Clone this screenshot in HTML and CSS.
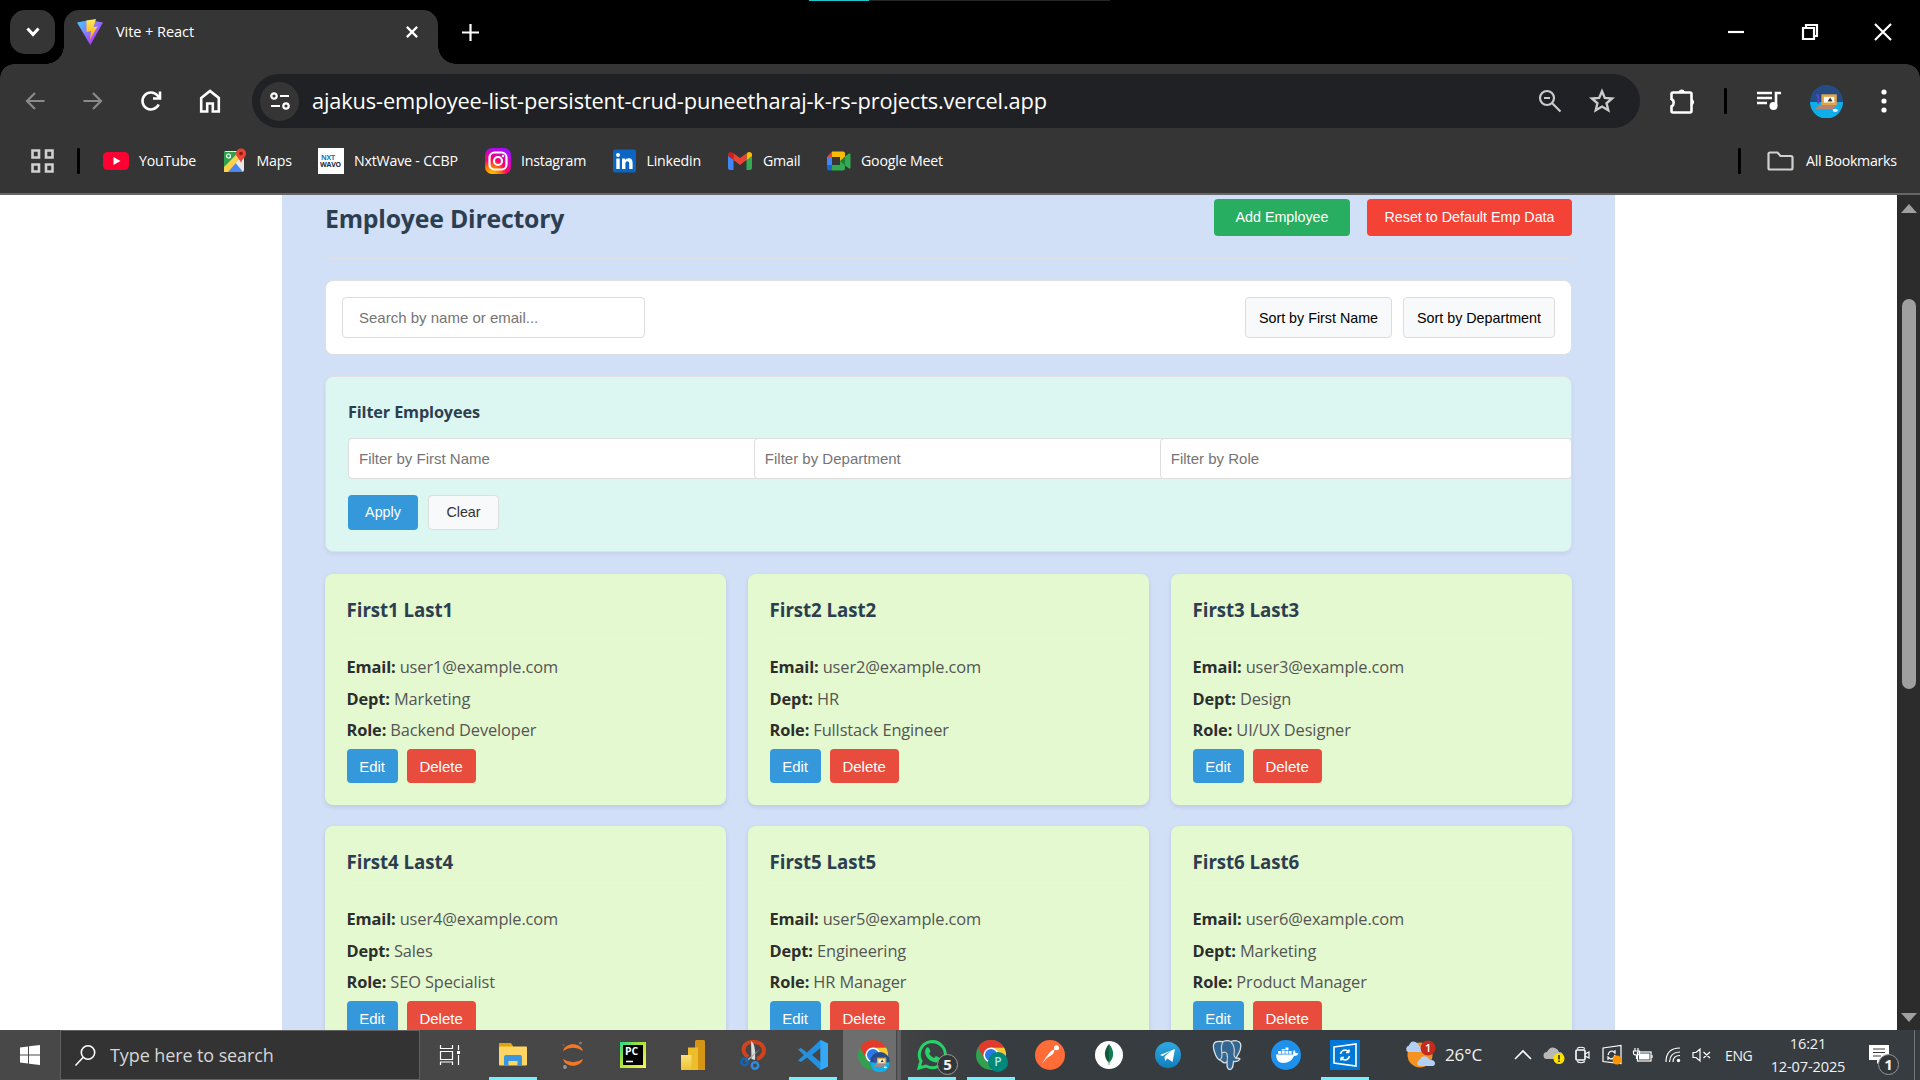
FILE: index.html
```
<!DOCTYPE html>
<html lang="en">
<head>
<meta charset="utf-8">
<title>Vite + React</title>
<link rel="stylesheet" href="styles.css">
</head>
<body>
<svg class="defs" width="0" height="0" aria-hidden="true">
  <defs>
    <linearGradient id="viteA" x1="0" y1="0" x2="1" y2="1"><stop offset="0" stop-color="#41d1ff"/><stop offset=".8" stop-color="#bd34fe"/></linearGradient>
    <linearGradient id="viteB" x1="0" y1="0" x2="0" y2="1"><stop offset="0" stop-color="#ffea63"/><stop offset="1" stop-color="#ffa800"/></linearGradient>
    <radialGradient id="insta" cx=".25" cy="1.05" r="1.1"><stop offset="0" stop-color="#ffd600"/><stop offset=".3" stop-color="#ff7a00"/><stop offset=".55" stop-color="#ff0169"/><stop offset="1" stop-color="#a40dff"/></radialGradient>
    <linearGradient id="pycharm" x1="0" y1="0" x2="1" y2="1"><stop offset="0" stop-color="#21d789"/><stop offset=".4" stop-color="#a5e23a"/><stop offset="1" stop-color="#fcf84a"/></linearGradient>
    <linearGradient id="tele" x1="0" y1="0" x2="0" y2="1"><stop offset="0" stop-color="#2fa9e0"/><stop offset="1" stop-color="#1180be"/></linearGradient>
    <linearGradient id="pbi" x1="0" y1="0" x2="0" y2="1"><stop offset="0" stop-color="#fbdf77"/><stop offset="1" stop-color="#efc432"/></linearGradient>
    <symbol id="chrome" viewBox="-15 -15 30 30">
      <circle r="15" fill="#32a04f"/>
      <path d="M13-7.5A15 15 0 0 1 0 15L6.5 3.750L0-7.5z" fill="#fcc934"/>
      <path d="M-13-7.5A15 15 0 0 1 13-7.5H0L-6.5 3.750z" fill="#e23b2e"/>
      <circle r="7.600" fill="#fff"/><circle r="6" fill="#2a79ea"/>
    </symbol>
    <symbol id="avatar" viewBox="0 0 32 32">
      <circle cx="16" cy="16" r="16" fill="#244d85"/>
      <path d="M0 16.500A16 16 0 0 0 32 16.500z" fill="#0eaee8"/>
      <rect x="11" y="9" width="15" height="10.500" fill="#dfa548"/><rect x="13.500" y="11.500" width="10" height="5.500" fill="#fff"/>
      <path d="M17 16l2.500-4 2.500 4z" fill="#333"/>
      <path d="M9 19.500h17l-4 4H5z" fill="#b98273"/><path d="M6 10.500q2-2 2 1.500v6" fill="none" stroke="#5a43c8" stroke-width="2"/>
      <ellipse cx="24.500" cy="24.500" rx="2.500" ry="1.500" fill="#fff"/>
    </symbol>
  </defs>
</svg>

<header class="browser">
  <div class="tabstrip">
    <div class="load-strip"></div>
    <button class="tab-search" aria-label="Search tabs"><svg width="14" height="10" viewBox="0 0 14 10"><path d="M1.500 1.500L7 7.500l5.500-6" class="ln w3"/></svg></button>
    <div class="tab">
      <svg width="26" height="26" viewBox="0 0 26 26"><path d="M0 3.500L12.500 1 26 3.500 13.300 26z" fill="url(#viteA)"/><path d="M9.500 1.500L19 0l-2.500 8 4-.5L13 20.500l1-8.500-4.500 1z" fill="url(#viteB)"/></svg>
      <span class="tab-title">Vite + React</span>
      <svg class="tab-close" width="12" height="12" viewBox="0 0 14 14"><path d="M1 1l12 12M13 1L1 13" class="ln w25"/></svg>
    </div>
    <svg class="new-tab" width="17" height="17" viewBox="0 0 17 17"><path d="M8.500 0v17M0 8.500h17" class="ln w2"/></svg>
    <div class="win-controls">
      <svg width="16" height="16" viewBox="0 0 16 16"><path d="M0 8h16" class="ln w2"/></svg>
      <svg width="16" height="16" viewBox="0 0 16 16"><path d="M1 4h11v11H1zM4 4V1h11v11h-3" class="ln w2"/></svg>
      <svg width="16" height="16" viewBox="0 0 16 16"><path d="M0 0l16 16M16 0L0 16" class="ln w2"/></svg>
    </div>
  </div>

  <div class="toolbar">
    <span class="tool dim"><svg width="20" height="18" viewBox="0 0 20 18"><path d="M19.500 9H2M10 1L2 9l8 8" class="ln w2"/></svg></span>
    <span class="tool dim"><svg width="20" height="18" viewBox="0 0 20 18"><path d="M.5 9H18M10 1l8 8-8 8" class="ln w2"/></svg></span>
    <span class="tool"><svg width="22" height="22" viewBox="0 0 22 22"><path d="M18.700 14.500A8.500 8.500 0 1 1 17.500 5.500L20 8.500M20 1.500v7h-7" class="ln w25"/></svg></span>
    <span class="tool home"><svg width="22" height="24" viewBox="0 0 22 24"><path d="M2.200 9L11 2l8.800 7v13.500h-6v-8H8.200v8h-6z" class="ln w25"/></svg></span>
    <div class="omnibox">
      <span class="site-info"><svg width="20" height="20" viewBox="0 0 20 20"><circle cx="4" cy="5" r="2.700" class="ln w2"/><path d="M10 5h9M1 15h9" class="ln w2"/><circle cx="16" cy="15" r="2.700" class="ln w2"/></svg></span>
      <span class="url">ajakus-employee-list-persistent-crud-puneetharaj-k-rs-projects.vercel.app</span>
      <span class="omni-icons">
        <svg width="24" height="24" viewBox="0 0 24 24"><circle cx="9" cy="9" r="7" class="ln w2"/><path d="M14 14l8.500 8.500M6 9h6" class="ln w2"/></svg>
        <svg width="26" height="26" viewBox="0 0 24 24"><path d="M12 3l2.600 6.200 6.700.5-5.100 4.400 1.600 6.500-5.800-3.500-5.800 3.500 1.600-6.500-5.100-4.400 6.700-.5z" class="ln w2"/></svg>
      </span>
    </div>
    <span class="tool ext"><svg width="28" height="28" viewBox="0 0 28 28"><path d="M5 5.500H22q1.500 0 1.500 1.500V24q0 1.500-1.500 1.500H5Q3.500 25.500 3.500 24V19.500a4.300 4.300 0 0 0 0-7.500V7Q3.500 5.500 5 5.500z" class="ln w25"/><path d="M10.500 5a3.300 3.300 0 0 1 6.400 0zM24 12a3.300 3.300 0 0 1 0 6.200z" fill="#fff"/></svg></span>
    <span class="tool sep"><i class="bar"></i></span>
    <span class="tool"><svg width="26" height="20" viewBox="0 0 26 20"><path d="M1 2h15M1 7h15M1 12h10" class="ln w25"/><path d="M20 15V2h5" class="ln w25"/><circle cx="17.500" cy="15" r="4" fill="#fff"/></svg></span>
    <span class="tool account"><svg width="33" height="33"><use href="#avatar"/></svg></span>
    <span class="tool"><svg width="6" height="24" viewBox="0 0 6 24" fill="#fff"><circle cx="3" cy="3" r="2.600"/><circle cx="3" cy="12" r="2.600"/><circle cx="3" cy="21" r="2.600"/></svg></span>
  </div>

  <nav class="bookmarks">
    <svg class="apps" width="23" height="24" viewBox="0 0 23 24"><path d="M1.500 1.500h6.500v7H1.500zM15 1.500h6.500v7H15zM1.500 15.500h6.500v7H1.500zM15 15.500h6.500v7H15z" class="ln w25 light"/></svg>
    <i class="bar"></i>
    <div class="marks">
      <a class="mark"><svg width="26" height="26" viewBox="0 0 26 26"><rect y="4" width="26" height="18" rx="4.500" fill="#ff0033"/><path d="M10.500 9l7 4-7 4z" fill="#fff"/></svg>YouTube</a>
      <a class="mark"><svg width="26" height="26" viewBox="0 0 26 26"><rect x="3" y="3" width="20" height="21" rx="2" fill="#e8e8e8"/><path d="M3 4h15L3 20z" fill="#2ba24c"/><path d="M3 24l10-11 9 11z" fill="#4a86f5"/><path d="M3 19L18 4l3 4L7 24H3z" fill="#ffd04b"/><circle cx="7.500" cy="8" r="2" class="ln w1"/><path d="M20 15c-1-4-5-6-5-9.500a5 5 0 0 1 10 0c0 3.500-4 5.500-5 9.500z" fill="#ea4335"/><circle cx="20" cy="5.500" r="1.800" fill="#8c1b12"/></svg>Maps</a>
      <a class="mark"><svg width="26" height="26" viewBox="0 0 26 26"><rect width="26" height="26" fill="#fff"/><text x="3" y="12" class="nxt blue">NXT</text><text x="2" y="19" class="nxt">WAVO</text></svg>NxtWave - CCBP</a>
      <a class="mark"><svg width="26" height="26" viewBox="0 0 26 26"><rect width="26" height="26" rx="7" fill="url(#insta)"/><rect x="4.500" y="4.500" width="17" height="17" rx="5" class="ln w2"/><circle cx="13" cy="13" r="4" class="ln w2"/><circle cx="18" cy="8" r="1.200" fill="#fff"/></svg>Instagram</a>
      <a class="mark"><svg width="26" height="26" viewBox="0 0 26 26"><rect x="2" y="1.500" width="23" height="23" rx="2" fill="#0a66c2"/><g fill="#fff"><circle cx="7" cy="7" r="2"/><path d="M5.300 10.500h3.400V21H5.300zM11 10.500h3.200V12c.7-1.100 1.800-1.800 3.400-1.800 3 0 4 2 4 4.800v6h-3.400v-5.400c0-1.400-.5-2.400-1.800-2.400-1.400 0-2 1-2 2.400V21H11z"/></g></svg>Linkedin</a>
      <a class="mark"><svg width="26" height="26" viewBox="0 0 26 26"><path d="M1 7v13q0 2 2 2h3.500V11z" fill="#4285f4"/><path d="M25 7v13q0 2-2 2h-3.500V11z" fill="#34a853"/><path d="M19.500 6.500v5.500L25 8V6.500c0-2.700-3-3.200-4.500-2z" fill="#fbbc04"/><path d="M6.500 6.500v5.500L1 8V6.500c0-2.700 3-3.200 4.500-2z" fill="#c5221f"/><path d="M6.500 5.200L13 10l6.500-4.800V12L13 17 6.500 12z" fill="#ea4335"/></svg>Gmail</a>
      <a class="mark"><svg width="26" height="26" viewBox="0 0 26 26"><path d="M2 9h5v8H2z" fill="#4285f4"/><path d="M7 3.500v5.500H2z" fill="#ea4335"/><path d="M7 3.500h11q2 0 2 2V12l-5 2V9H7z" fill="#fbbc04"/><path d="M2 17h5v5.500H4q-2 0-2-2z" fill="#1967d2"/><path d="M7 17h8v-4h5v7.500q0 2-2 2H7z" fill="#34a853"/><path d="M15 13l5-4.500v9z" fill="#188038"/><path d="M20 8.500l4-3q1.500-.5 1.500 1v13q0 1.500-1.500 1l-4-3z" fill="#34a853"/></svg>Google Meet</a>
    </div>
    <i class="bar"></i>
    <a class="mark all"><svg width="27" height="20" viewBox="0 0 27 20"><path d="M1.500 3q0-1.500 1.500-1.500h7.500l3 3.500H24q1.500 0 1.500 1.500V17q0 1.500-1.500 1.500H3q-1.500 0-1.500-1.500z" class="ln w2 light"/></svg>All Bookmarks</a>
  </nav>
</header>

<div class="viewport">
  <main class="app">
    <div class="app-head">
      <h1>Employee Directory</h1>
      <div class="head-actions">
        <button class="btn add">Add Employee</button>
        <button class="btn reset">Reset to Default Emp Data</button>
      </div>
    </div>

    <section class="controls">
      <input class="search" type="text" placeholder="Search by name or email...">
      <div class="sorts">
        <button class="btn sort first">Sort by First Name</button>
        <button class="btn sort dept">Sort by Department</button>
      </div>
    </section>

    <section class="filters">
      <h3>Filter Employees</h3>
      <div class="filter-inputs">
        <input type="text" placeholder="Filter by First Name">
        <input type="text" placeholder="Filter by Department">
        <input type="text" placeholder="Filter by Role">
      </div>
      <div class="filter-actions">
        <button class="btn apply">Apply</button>
        <button class="btn clear">Clear</button>
      </div>
    </section>

    <section class="cards">
      <article class="card"><h2>First1 Last1</h2><p><b>Email:</b> user1@example.com</p><p><b>Dept:</b> Marketing</p><p><b>Role:</b> Backend Developer</p><div class="card-actions"><button class="btn edit">Edit</button><button class="btn delete">Delete</button></div></article>
      <article class="card"><h2>First2 Last2</h2><p><b>Email:</b> user2@example.com</p><p><b>Dept:</b> HR</p><p><b>Role:</b> Fullstack Engineer</p><div class="card-actions"><button class="btn edit">Edit</button><button class="btn delete">Delete</button></div></article>
      <article class="card"><h2>First3 Last3</h2><p><b>Email:</b> user3@example.com</p><p><b>Dept:</b> Design</p><p><b>Role:</b> UI/UX Designer</p><div class="card-actions"><button class="btn edit">Edit</button><button class="btn delete">Delete</button></div></article>
      <article class="card"><h2>First4 Last4</h2><p><b>Email:</b> user4@example.com</p><p><b>Dept:</b> Sales</p><p><b>Role:</b> SEO Specialist</p><div class="card-actions"><button class="btn edit">Edit</button><button class="btn delete">Delete</button></div></article>
      <article class="card"><h2>First5 Last5</h2><p><b>Email:</b> user5@example.com</p><p><b>Dept:</b> Engineering</p><p><b>Role:</b> HR Manager</p><div class="card-actions"><button class="btn edit">Edit</button><button class="btn delete">Delete</button></div></article>
      <article class="card"><h2>First6 Last6</h2><p><b>Email:</b> user6@example.com</p><p><b>Dept:</b> Marketing</p><p><b>Role:</b> Product Manager</p><div class="card-actions"><button class="btn edit">Edit</button><button class="btn delete">Delete</button></div></article>
    </section>
  </main>
  <div class="scrollbar">
    <svg width="16" height="9" viewBox="0 0 16 9"><path d="M0 9l8-9 8 9z" fill="#a0a0a0"/></svg>
    <span class="thumb"></span>
    <svg class="down" width="16" height="9" viewBox="0 0 16 9"><path d="M0 0l8 9 8-9z" fill="#a0a0a0"/></svg>
  </div>
</div>

<footer class="taskbar">
  <span class="start"><svg width="20" height="20" viewBox="0 0 20 20" fill="#fff"><path d="M0 2.500L8 1.400V9.500H0zM9 1.200L20 0v9.500H9zM0 10.500h8v8.100L0 17.500zM9 10.500h11V20L9 18.800z"/></svg></span>
  <div class="search-box"><svg width="21" height="21" viewBox="0 0 21 21"><circle cx="13" cy="7.500" r="6.700" class="ln w15"/><path d="M8 12.500L.5 20.500" class="ln w15"/></svg>Type here to search</div>
  <span class="task-view"><svg width="20" height="20" viewBox="0 0 20 20"><path d="M.5 0v3.500h12V0M.5 6.500h12v8H.5zM.5 20v-3h12v3M18.500 0v5M18.500 10v10" class="ln w1"/><path d="M17 6h3v3h-3z" fill="#fff"/></svg></span>
  <div class="pinned">
    <span class="pin open"><svg width="28" height="24" viewBox="0 0 28 24"><path d="M0 0h12l2 3v4H0z" fill="#e3a008"/><rect y="3.500" width="28" height="19" rx="1" fill="#ffd563"/><path d="M5 23V14q0-2 2-2h14q2 0 2 2v9h-4.500v-5h-9v5z" fill="#3a96dd"/></svg></span>
    <span class="pin"><svg width="22" height="28" viewBox="0 0 22 28"><path d="M1 10C3 1 19 1 21 10Q11 3.500 1 10zM1 18C3 27 19 27 21 18Q11 24.500 1 18z" fill="#f37726"/><circle cx="18.500" cy="2" r="1.600" fill="#777"/><circle cx="3" cy="26" r="1.900" fill="#999"/><circle cx="1.500" cy="4" r="1" fill="#666"/></svg></span>
    <span class="pin"><svg width="26" height="26" viewBox="0 0 26 26"><rect width="26" height="26" fill="url(#pycharm)"/><rect x="3" y="3" width="20" height="20" fill="#000"/><text x="5" y="13" class="pc">PC</text><path d="M6 19.500h7" class="ln w15"/></svg></span>
    <span class="pin"><svg width="24" height="30" viewBox="0 0 24 30"><path d="M14 1.500Q14 0 15.500 0h7Q24 0 24 1.500V30H14z" fill="#d79514"/><path d="M7 7.500h10V30H7z" fill="#edbd2c"/><path d="M0 15h10.500v15H0z" fill="url(#pbi)"/></svg></span>
    <span class="pin"><svg width="26" height="30" viewBox="0 0 26 30"><path d="M8 17C0 11 4 2 12 2 21 1 26 8 23 14q-2 4-6 5" fill="none" stroke="#d2431b" stroke-width="4"/><path d="M11 1q5 3 4 19l-3.500-1z" fill="#ddd"/><path d="M20 9L7 22l-2-1z" fill="#aaa"/><circle cx="4.500" cy="22" r="3.200" fill="none" stroke="#1464b4" stroke-width="2.500"/><circle cx="15" cy="25.500" r="3.200" fill="none" stroke="#2a8ce0" stroke-width="2.500"/></svg></span>
    <span class="pin open"><svg width="30" height="30" viewBox="0 0 30 30"><path d="M22.500 0L30 3.500v23L22.500 30 9 17.500 3 22 0 20.500 6 15 0 9.500 3 8l6 4.500zM22.500 8L14 15l8.500 7z" fill="#2391e0"/><path d="M22.500 0L30 3.500v23L22.500 30z" fill="#35a8f5"/></svg></span>
    <span class="pin active"><svg width="30" height="30"><use href="#chrome"/></svg><svg class="profile" width="20" height="20"><use href="#avatar"/></svg></span>
    <span class="pin open"><svg width="30" height="30" viewBox="0 0 30 30"><path d="M2 28l2-7a13 13 0 1 1 5 5z" fill="none" stroke="#25d366" stroke-width="3"/><path d="M9 8.500q2-2.500 3.500.5l1 2.500-1.500 2q2 3.500 5 4.500l2-2 4 2q0 4-4.500 4.500Q9.500 21 8 12.500 8 10 9 8.500z" fill="#25d366"/></svg><b class="count">5</b></span>
    <span class="pin open"><svg width="30" height="30"><use href="#chrome"/></svg><b class="initial">P</b></span>
    <span class="pin"><svg width="30" height="30" viewBox="0 0 30 30"><circle cx="15" cy="15" r="15" fill="#ff6c37"/><path d="M20 9l-2 5-6 4-5 5.500 4.500-7L16 11z" fill="#fff"/><circle cx="21.500" cy="7.800" r="2.500" fill="#fff"/></svg></span>
    <span class="pin"><svg width="28" height="28" viewBox="0 0 28 28"><circle cx="14" cy="14" r="14" fill="#fff"/><path d="M14 3c6 7 5 14 0 19z" fill="#0f7d4f"/><path d="M14 3c-6 7-5 14 0 19z" fill="#13593d"/><path d="M14 20v4" stroke="#8a9a90"/></svg></span>
    <span class="pin"><svg width="26" height="26" viewBox="0 0 26 26"><circle cx="13" cy="13" r="13" fill="url(#tele)"/><path d="M5 13l15-6-2.500 13-5-3.500-2.500 2.500-.5-4.500 7-6-9 5.500z" fill="#fff"/></svg></span>
    <span class="pin"><svg width="30" height="30" viewBox="0 0 30 30"><path d="M8 20C4 19 0 7 2 3.500 4 0 9 2 11 1.500c3-1 6-1 8 0 3-1 8-1.500 9.500 2C30 8 26 15 24 18q3 0 4 1-2 3-6.500 2.500C21 26 21 29 18 29.500c-3 0-3-3-3-7.500-2 1.500-3.500 1-5-.5z" fill="#336791" stroke="#d9dfe5" stroke-width="1.300"/><path d="M11 2C8 6 10 12 10 15q0 3-2 5M19 2c5 5 3 10 3 13q0 2 2 3M10 13q4-2 5 1t0 8" class="ln w1 light"/></svg></span>
    <span class="pin"><svg width="30" height="30" viewBox="0 0 30 30"><circle cx="15" cy="15" r="15" fill="#1d91ec"/><path d="M5 14.500h17q-.5-2.500 1-4.500 1.500 1 1.500 3 1.500-.3 3 .5-1 2.500-4.500 2.500-3 7-10.500 7-7.500 0-7.500-8.500z" fill="#fff"/><path d="M7 11h3v2.800H7zM10.700 11h3v2.800h-3zM14.400 11h3v2.800h-3zM18 11h2.700v2.800H18zM14.400 7.500h3v2.800h-3zM10.700 9h3v1.500h-3z" fill="#fff"/></svg></span>
    <span class="pin open"><svg width="30" height="30" viewBox="0 0 30 30"><rect width="30" height="30" fill="#0078d7"/><path d="M4 7l22-3v22L4 23z" class="ln w15"/><path d="M10.500 14q1-4 5-4 2.500.5 3.500 2.500v-3M19 12.500h-3M19.500 16q-1 4-5 4-2.500-.5-3.500-2.500v3M11 17.500h3" class="ln w15"/></svg></span>
  </div>
  <div class="weather"><svg width="31" height="30" viewBox="0 0 31 30"><circle cx="15" cy="15" r="12.500" fill="#f49322"/><path d="M3 12a3.500 3.500 0 0 1 1-6.500Q6 0 10.500 2q3 1 3.500 4 4 1 3 6z" fill="#b5d0f6"/><path d="M14 26a3.300 3.300 0 0 1 .5-6Q17 15 21 16.500q3 1 3.500 3.500 5-.5 5.500 3 0 3-2.500 3z" fill="#b5d0f6"/><circle cx="23" cy="8" r="7.500" fill="#c42b1c"/><text x="23" y="12.200" class="alert">1</text></svg>26°C</div>
  <div class="tray">
    <svg width="18" height="10" viewBox="0 0 18 10"><path d="M1 9l8-8 8 8" class="ln w15"/></svg>
    <svg width="20" height="18" viewBox="0 0 20 18"><path d="M3 13a3.500 3.500 0 0 1 0-7Q6 0 11 2q3 1 4 4 4 0 4 4 0 3-3 3z" fill="#b8b8b8"/><circle cx="15" cy="12.500" r="5.500" fill="#fce100"/><path d="M15 9v4.500M15 14.500v1.500" stroke="#222" stroke-width="1.500"/></svg>
    <svg width="15" height="18" viewBox="0 0 15 18"><rect x="1" y="4" width="9" height="10" rx="1" class="ln w15"/><path d="M10 8l4-2v6l-4-2M2 2.500Q6 0 10 2.500M2 15.500Q6 18 10 15.500" class="ln w1"/></svg>
    <svg width="20" height="20" viewBox="0 0 20 20"><path d="M1 3l18-2.500v18L1 16.500z" class="ln w1"/><path d="M6 10q1-4 4.500-4L13 8V5M13 10q-1 4-4.500 4L6 12v3" class="ln w1"/><circle cx="15" cy="15" r="4.500" fill="#ff9500"/></svg>
    <svg width="20" height="16" viewBox="0 0 20 16"><rect x="4.500" y="5" width="13.500" height="9" class="ln w1"/><rect x="6" y="6.500" width="10.500" height="6" fill="#fff"/><path d="M19 8v3M2 1v3M5 1v3M.5 4h6v2q0 2-3 2t-3-2zM3.500 8v4" class="ln w1"/></svg>
    <svg width="16" height="16" viewBox="0 0 16 16"><path d="M1 15Q1 1 15 1M4.500 15Q5 5 15 5M8 15q0-6.500 7-6.500" class="ln w1"/><circle cx="13.500" cy="13.500" r="1.700" fill="#fff"/></svg>
    <svg width="20" height="16" viewBox="0 0 20 16"><path d="M1 5.500h3L8 2v12L4 10.500H1zM11.500 5l6.500 6M18 5l-6.500 6" class="ln w1"/></svg>
  </div>
  <span class="lang">ENG</span>
  <div class="clock"><span>16:21</span><span>12-07-2025</span></div>
  <div class="notify"><svg width="20" height="20" viewBox="0 0 20 20"><path d="M0 0h20v15h-8l-4 4v-4H0z" fill="#fff"/><path d="M4 4h12M4 7.500h12M4 11h8" stroke="#383c3f" stroke-width="1.200"/></svg><b class="count">1</b></div>
  <i class="desktop"></i>
</footer>
</body>
</html>
```
FILE: styles.css
```
* { box-sizing: border-box; }
body {
  margin: 0;
  width: 1920px;
  height: 1080px;
  overflow: hidden;
  display: flex;
  flex-direction: column;
  background: #fff;
  font-family: "Open Sans", "Noto Sans", sans-serif;
}
svg { display: block; flex: none; overflow: visible; }
.defs { position: absolute; }
h1, h2, h3, p { margin: 0; }

.ln { fill: none; stroke: #fff; }
.w1 { stroke-width: 1.2; }
.w15 { stroke-width: 1.6; }
.w2 { stroke-width: 2.2; }
.w25 { stroke-width: 2.6; }
.w3 { stroke-width: 3; }
.light { stroke: #d0d0d0; }

/* browser frame */
.browser {
  flex: none;
  height: 195px;
  background: #353535;
  border-bottom: 2px solid #666;
  color: #fff;
}
.tabstrip {
  position: relative;
  display: flex;
  align-items: center;
  height: 64px;
  padding-left: 10px;
  background: #000;
}
.tabstrip::after {
  content: "";
  position: absolute;
  left: 0;
  top: 64px;
  width: 1920px;
  height: 14px;
  background:
    radial-gradient(circle at 100% 100%, transparent 13.5px, #000 14px) 0 0 / 14px 14px no-repeat,
    radial-gradient(circle at 0 100%, transparent 13.5px, #000 14px) 100% 0 / 14px 14px no-repeat;
}
.load-strip {
  position: absolute;
  left: 809px;
  top: 0;
  width: 301px;
  height: 1px;
  background: linear-gradient(90deg, #1fc3cb 60px, #262626 60px);
}
.tab-search {
  display: flex;
  align-items: center;
  justify-content: center;
  width: 45px;
  height: 44px;
  border: 0;
  border-radius: 15px;
  background: #353535;
}
.tab {
  position: relative;
  align-self: flex-end;
  display: flex;
  align-items: center;
  width: 374px;
  height: 54px;
  margin-left: 9px;
  padding: 0 20px 10px 13px;
  border-radius: 15px 15px 0 0;
  background: #353535;
}
.tab::before, .tab::after {
  content: "";
  position: absolute;
  bottom: 0;
  width: 18px;
  height: 18px;
}
.tab::before { left: -18px; background: radial-gradient(circle at 0 0, transparent 17.5px, #353535 18px); }
.tab::after { right: -18px; background: radial-gradient(circle at 100% 0, transparent 17.5px, #353535 18px); }
.tab-title { margin-left: 13px; padding-bottom: 2px; font-size: 14.6px; letter-spacing: -.1px; line-height: 20px; }
.tab-close { margin-left: auto; }
.new-tab { margin-left: 24px; }
.win-controls { display: flex; gap: 57.5px; margin-left: auto; padding-right: 29px; }

.toolbar { display: flex; align-items: center; height: 73px; padding: 1px 0 0 6px; }
.tool { display: flex; align-items: center; justify-content: center; width: 58px; flex: none; }
.tool.dim { opacity: .42; }
.tool.home { padding-left: 2px; }
.tool.sep { width: 29px; }
.tool.account { width: 57px; }
.bar { display: block; width: 3px; height: 26px; border-radius: 1px; background: #000; flex: none; }
.ext { margin-left: 13px; }
.omnibox {
  display: flex;
  align-items: center;
  width: 1388px;
  height: 54px;
  margin-left: 14px;
  padding: 0 25px 0 8px;
  border-radius: 27px;
  background: #202124;
}
.site-info {
  display: flex;
  align-items: center;
  justify-content: center;
  width: 39px;
  height: 39px;
  border-radius: 50%;
  background: #353535;
}
.url { margin-left: 13px; font-size: 21.8px; letter-spacing: -.14px; line-height: 30px; white-space: nowrap; }
.omni-icons { display: flex; align-items: center; gap: 27px; margin-left: auto; opacity: .76; }

.bookmarks { display: flex; align-items: center; height: 48px; padding: 0 23px 0 31px; }
.bookmarks .apps { margin-right: 23px; }
.marks {
  display: grid;
  grid-template-columns: 117.5px 97.5px 167px 125.5px 116.5px 98px 120px;
  margin: 0 auto 0 23px;
}
.mark { display: flex; align-items: center; gap: 10px; font-size: 14.2px; letter-spacing: -.2px; line-height: 20px; white-space: nowrap; }
.mark.all { width: 130px; margin-left: 26px; gap: 12px; letter-spacing: -.3px; }
.nxt { font: 700 7px "Open Sans", sans-serif; fill: #1b2a3f; }
.nxt.blue { fill: #1976c5; }

/* page */
.viewport { display: flex; height: 835px; flex: none; overflow: hidden; }
.app {
  width: 1333px;
  height: 835px;
  margin: 0 auto;
  padding: 4px 43px 0;
  overflow: hidden;
  background: #d1dff7;
}
.app-head {
  display: flex;
  align-items: center;
  justify-content: space-between;
  height: 60px;
  padding-bottom: 22px;
  border-bottom: 1px solid #e0e0e0;
}
h1 { font-size: 24.8px; letter-spacing: -.2px; line-height: 36px; color: #2c3e50; }
.head-actions { display: flex; gap: 17px; }
.btn {
  padding: 0;
  border: 0;
  border-radius: 4px;
  font: 14.3px "Liberation Sans", Arial, sans-serif;
  color: #fff;
  white-space: nowrap;
}
.head-actions .btn { padding-bottom: 2px; }
.add { width: 136px; height: 37px; background: #27ae60; }
.reset { width: 205px; height: 37px; background: #f44336; }

input {
  min-width: 0;
  border: 1px solid #ddd;
  border-radius: 4px;
  background: #fff;
  font: 15px "Liberation Sans", Arial, sans-serif;
}
input::placeholder { color: #757575; opacity: 1; }
.controls {
  display: flex;
  align-items: center;
  justify-content: space-between;
  height: 75px;
  margin-top: 21px;
  padding: 0 16px;
  border: 1px solid #e0e0e0;
  border-radius: 8px;
  background: #fff;
}
.search { width: 303px; height: 41px; padding: 0 16px; }
.sorts { display: flex; gap: 11px; }
.sort { height: 41px; border: 1px solid #ddd; background: #f8f9fa; color: #000; }
.sort.first { width: 147px; }
.sort.dept { width: 152px; }

.filters {
  height: 176px;
  margin-top: 21px;
  padding: 22px 22px 0;
  border: 1px solid #e0e0e0;
  border-radius: 8px;
  background: #dcf6f2;
  box-shadow: 0 2px 4px rgba(0, 0, 0, .06);
}
h3 { font-size: 16.3px; letter-spacing: -.15px; line-height: 26px; color: #2c3e50; }
.filter-inputs {
  display: grid;
  grid-template-columns: repeat(3, minmax(0, 1fr));
  gap: 16.6px;
  margin-top: 13px;
}
.filter-inputs input { width: 412.5px; height: 41px; padding: 0 10px; }
.filter-actions { display: flex; gap: 10px; margin-top: 16px; }
.filter-actions .btn { padding-bottom: 2px; }
.apply { width: 70px; height: 35px; background: #3498db; }
.clear { width: 71px; height: 35px; border: 1px solid #ddd; background: #f8f9fa; color: #333; }

.cards { display: grid; grid-template-columns: repeat(3, 1fr); gap: 21px 22px; margin-top: 22px; }
.card {
  height: 231px;
  padding: 22px 22px 22px 21.6px;
  border-radius: 8px;
  background: #e4f9cf;
  box-shadow: 0 2px 5px rgba(0, 0, 0, .1);
}
.card h2 {
  height: 38px;
  margin-bottom: 17px;
  border-bottom: 1px solid #e8f0e0;
  font-size: 18.7px;
  letter-spacing: -.07px;
  line-height: 27px;
  color: #2c3e50;
}
.card p { font-size: 16.4px; letter-spacing: -.12px; line-height: 31.5px; color: #555; }
.card b { color: #2d2d2d; letter-spacing: -.15px; }
.card-actions { display: flex; gap: 9px; margin-top: 3px; }
.card-actions .btn { height: 34px; padding-top: 1px; font-size: 15px; }
.edit { width: 51px; background: #3498db; }
.delete { width: 69px; background: #e74c3c; }

.scrollbar {
  display: flex;
  flex-direction: column;
  align-items: center;
  width: 23px;
  padding: 9px 0 8px 1px;
  background: #2c2c2c;
}
.thumb { width: 14px; height: 390px; margin-top: 86px; border-radius: 7px; background: #9f9f9f; }
.scrollbar .down { margin-top: auto; }

/* taskbar */
.taskbar {
  display: flex;
  flex: none;
  height: 50px;
  background: linear-gradient(90deg, #484848 0, #464646 840px, #373c40 1000px, #373c40 100%);
  color: #f2f2f2;
}
.start { display: flex; align-items: center; justify-content: center; width: 60px; }
.search-box {
  display: flex;
  align-items: center;
  gap: 14px;
  width: 360px;
  padding-left: 14px;
  border: 1px solid #606060;
  background: #333;
  color: #d6d6d6;
  font-size: 18px;
  letter-spacing: -.1px;
}
.task-view { display: flex; align-items: center; justify-content: center; width: 63px; padding-right: 3px; }
.pinned { display: flex; width: 891px; flex: none; }
.pin {
  position: relative;
  display: flex;
  align-items: center;
  justify-content: center;
  flex: none;
  width: 59px;
}
.pin:nth-child(-n+6) { width: 60px; }
.pin.open::after {
  content: "";
  position: absolute;
  left: 5.5px;
  bottom: 0;
  width: 48.5px;
  height: 3px;
  background: #76eefc;
}
.pin.active::before {
  content: "";
  position: absolute;
  left: 0;
  top: 0;
  width: 58px;
  height: 50px;
  border-bottom: 3px solid #76eefc;
  background: linear-gradient(90deg, #6e6e6e 53px, #444 53px, #444 54px, #5c5e5f 54px);
}
.pin.active svg { position: relative; }
.pin.active .profile { position: absolute; left: 27px; top: 22px; }
.count {
  position: absolute;
  left: 35px;
  top: 24px;
  width: 21px;
  height: 21px;
  border: 1px solid #999;
  border-radius: 50%;
  background: #333638;
  font-size: 15px;
  line-height: 19px;
  text-align: center;
  z-index: 1;
}
.initial {
  position: absolute;
  left: 27px;
  top: 22px;
  width: 20px;
  height: 20px;
  border-radius: 50%;
  background: #00897b;
  font-size: 12px;
  font-weight: 600;
  line-height: 19px;
  text-align: center;
  color: #b4e5df;
}
.pc { font: 700 10.5px "Open Sans", sans-serif; fill: #fff; }
.alert { font: 600 11px "Open Sans", sans-serif; fill: #fff; text-anchor: middle; }
.weather { display: flex; align-items: center; gap: 9px; width: 109px; margin-left: 31px; font-size: 17px; letter-spacing: -.1px; line-height: 24px; }
.tray { display: flex; align-items: center; justify-content: space-between; width: 198px; }
.lang { align-self: center; width: 28px; margin-left: 13px; font-size: 14px; letter-spacing: -.4px; }
.clock {
  display: flex;
  flex-direction: column;
  justify-content: center;
  align-items: center;
  width: 76px;
  margin-left: 17px;
  font-size: 14.6px;
  letter-spacing: -.15px;
  line-height: 23px;
}
.notify { position: relative; width: 20px; margin-left: 23px; padding-top: 15px; }
.notify .count { left: 9px; }
.desktop { width: 1px; margin-left: 25px; background: #70757a; }
```
